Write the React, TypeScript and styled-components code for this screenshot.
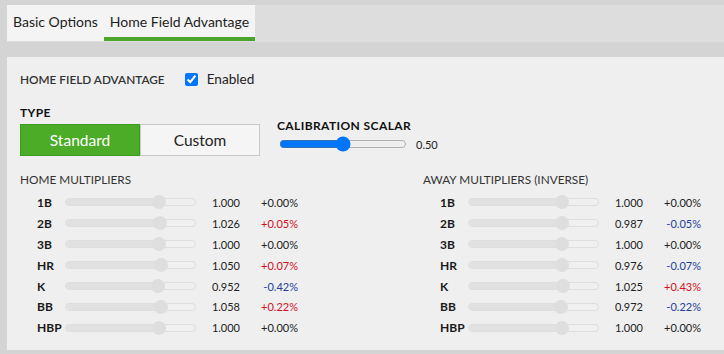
import React from "react";
import styled, { createGlobalStyle } from "styled-components";

type Row = { label: string; value: number; delta: number };

const home: Row[] = [
    { label: "1B", value: 1.0, delta: 0 },
    { label: "2B", value: 1.026, delta: 0.05 },
    { label: "3B", value: 1.0, delta: 0 },
    { label: "HR", value: 1.05, delta: 0.07 },
    { label: "K", value: 0.952, delta: -0.42 },
    { label: "BB", value: 1.058, delta: 0.22 },
    { label: "HBP", value: 1.0, delta: 0 },
];

const away: Row[] = [
    { label: "1B", value: 1.0, delta: 0 },
    { label: "2B", value: 0.987, delta: -0.05 },
    { label: "3B", value: 1.0, delta: 0 },
    { label: "HR", value: 0.976, delta: -0.07 },
    { label: "K", value: 1.025, delta: 0.43 },
    { label: "BB", value: 0.972, delta: -0.22 },
    { label: "HBP", value: 1.0, delta: 0 },
];

function formatDelta(d: number) {
    return (d >= 0 ? "+" : "") + d.toFixed(2) + "%";
}

function tone(d: number) {
    if (d > 0) return "up";
    if (d < 0) return "down";
    return "flat";
}

export default function App() {
    return (
        <>
            <GlobalStyle />
            <Page>
                <TabBar>
                    <Tab>Basic Options</Tab>
                    <Tab $active>Home Field Advantage</Tab>
                </TabBar>
                <Panel>
                    <EnabledRow>
                        <Heading>Home Field Advantage</Heading>
                        <CheckLabel>
                            <input type="checkbox" defaultChecked />
                            Enabled
                        </CheckLabel>
                    </EnabledRow>
                    <Controls>
                        <div>
                            <StrongLabel>Type</StrongLabel>
                            <Segmented>
                                <Segment $active>Standard</Segment>
                                <Segment>Custom</Segment>
                            </Segmented>
                        </div>
                        <div>
                            <StrongLabel>Calibration Scalar</StrongLabel>
                            <ScalarRow>
                                <input type="range" min={0} max={1} step={0.01} defaultValue={0.5} />
                                <ScalarValue>0.50</ScalarValue>
                            </ScalarRow>
                        </div>
                    </Controls>
                    <Columns>
                        <MultiplierList title="Home Multipliers" rows={home} />
                        <MultiplierList title="Away Multipliers (Inverse)" rows={away} />
                    </Columns>
                </Panel>
            </Page>
        </>
    );
}

function MultiplierList({ title, rows }: { title: string; rows: Row[] }) {
    return (
        <Column>
            <ColumnTitle>{title}</ColumnTitle>
            {rows.map((r) => {
                const pct = ((r.value + 2) / 4) * 100;
                return (
                    <MultRow key={r.label}>
                        <RowLabel>{r.label}</RowLabel>
                        <Track>
                            <Fill style={{ width: `${pct}%` }} />
                            <Thumb style={{ left: `calc(${pct / 100} * (100% - 14px))` }} />
                        </Track>
                        <Value>{r.value.toFixed(3)}</Value>
                        <Delta $tone={tone(r.delta)}>{formatDelta(r.delta)}</Delta>
                    </MultRow>
                );
            })}
        </Column>
    );
}

const GlobalStyle = createGlobalStyle`
    body {
        margin: 0;
        background: #d4d4d4;
        font-family: Lato, "Noto Sans", sans-serif;
        color: #222;
    }
`;

const Page = styled.div`
    padding: 5px 0 0 7px;
    width: 717px;
`;

const TabBar = styled.div`
    display: flex;
    height: 37px;
    background: #dddddd;
`;

const Tab = styled.div<{ $active?: boolean }>`
    display: flex;
    align-items: center;
    padding: 1px 6px 0 6px;
    background: #f4f4f4;
    font-size: 14px;
    color: #1e1e1e;
    box-sizing: border-box;
    border-bottom: 4px solid ${(p) => (p.$active ? "#4aa52a" : "#f4f4f4")};
    height: 36px;
    margin-bottom: 1px;
`;

const Panel = styled.div`
    margin-top: 15px;
    background: #efefef;
    padding: 14px 13px 12px 13px;
    height: 267px;
`;

const EnabledRow = styled.div`
    display: flex;
    align-items: center;
    height: 16px;
`;

const Heading = styled.div`
    font-size: 11.8px;
    font-weight: 600;
    letter-spacing: 0;
    text-transform: uppercase;
    color: #333;
`;

const CheckLabel = styled.label`
    display: flex;
    align-items: center;
    margin-left: 16px;
    font-size: 13.6px;
    color: #222;

    input {
        margin: 0 9px 0 4px;
        width: 13px;
        height: 13px;
    }
`;

const Controls = styled.div`
    display: flex;
    align-items: flex-end;
    gap: 17px;
    margin-top: 19px;
`;

const StrongLabel = styled.div`
    font-size: 12px;
    font-weight: 700;
    letter-spacing: 0.4px;
    text-transform: uppercase;
    color: #111;
    line-height: 14px;
`;

const Segmented = styled.div`
    display: flex;
    margin-top: 4px;
`;

const Segment = styled.div<{ $active?: boolean }>`
    width: 120px;
    height: 32px;
    box-sizing: border-box;
    display: flex;
    align-items: center;
    justify-content: center;
    font-size: 15.5px;
    border: 1px solid ${(p) => (p.$active ? "#3f9a22" : "#c8c8c8")};
    background: ${(p) => (p.$active ? "#4cab27" : "#f5f5f5")};
    color: ${(p) => (p.$active ? "#fff" : "#222")};
`;

const ScalarRow = styled.div`
    display: flex;
    align-items: center;
    height: 22px;
    margin-bottom: 1px;

    input {
        margin: 0 0 0 2px;
        width: 128px;
    }
`;

const ScalarValue = styled.span`
    font-size: 11px;
    margin-left: 9px;
    color: #222;
`;

const Columns = styled.div`
    display: grid;
    grid-template-columns: 403px 1fr;
    margin-top: 17px;
`;

const Column = styled.div``;

const ColumnTitle = styled.div`
    font-size: 11.8px;
    font-weight: 400;
    letter-spacing: 0;
    text-transform: uppercase;
    color: #333;
    line-height: 14px;
    margin-bottom: 5px;
`;

const MultRow = styled.div`
    display: grid;
    grid-template-columns: 28px 131px 44px 58px;
    align-items: center;
    height: 20.9px;
    padding-left: 17px;
`;

const RowLabel = styled.div`
    font-size: 12px;
    font-weight: 700;
    color: #1a1a1a;
`;

const Track = styled.div`
    position: relative;
    height: 8px;
    box-sizing: border-box;
    border: 1px solid #dedede;
    border-radius: 4px;
    background: #f0f0f0;
`;

const Fill = styled.div`
    height: 100%;
    border-radius: 4px;
    background: #e1e1e1;
`;

const Thumb = styled.div`
    position: absolute;
    top: 50%;
    width: 14px;
    height: 14px;
    margin-top: -7px;
    border-radius: 50%;
    background: #dedede;
`;

const Value = styled.div`
    font-size: 11px;
    text-align: right;
    color: #222;
`;

const Delta = styled.div<{ $tone: string }>`
    font-size: 11px;
    text-align: right;
    color: ${(p) => (p.$tone === "up" ? "#d0101e" : p.$tone === "down" ? "#23409c" : "#222")};
`;
